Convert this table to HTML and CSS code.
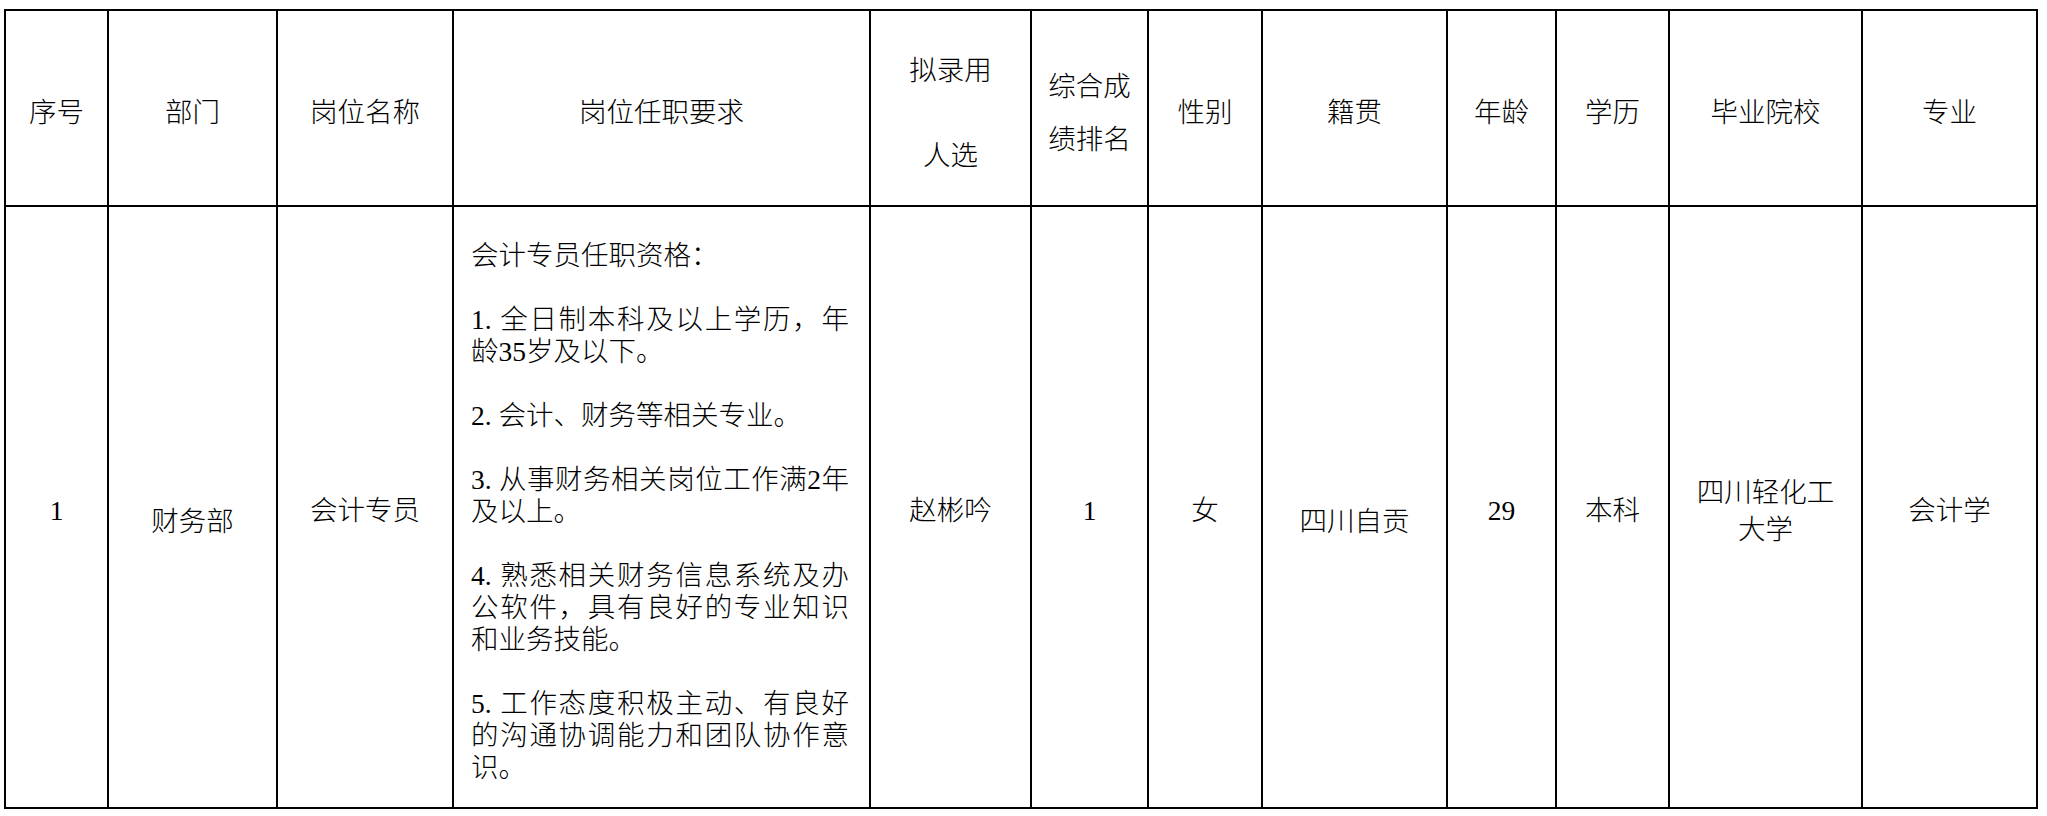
FILE: index.html
```html
<!DOCTYPE html>
<html lang="zh-CN">
<head>
<meta charset="utf-8">
<title>拟录用人选</title>
<link rel="stylesheet" href="styles.css">
</head>
<body>
<table class="sheet">
  <colgroup>
    <col class="c-no"><col class="c-dept"><col class="c-post"><col class="c-req"><col class="c-name"><col class="c-rank"><col class="c-sex"><col class="c-home"><col class="c-age"><col class="c-edu"><col class="c-school"><col class="c-major">
  </colgroup>
  <thead>
    <tr class="head-row">
      <th>序号</th>
      <th>部门</th>
      <th>岗位名称</th>
      <th>岗位任职要求</th>
      <th><div class="wide-lines">拟录用<br>人选</div></th>
      <th><div class="mid-lines">综合成<br>绩排名</div></th>
      <th>性别</th>
      <th>籍贯</th>
      <th>年龄</th>
      <th>学历</th>
      <th>毕业院校</th>
      <th>专业</th>
    </tr>
  </thead>
  <tbody>
    <tr class="body-row">
      <td>1</td>
      <td class="low">财务部</td>
      <td>会计专员</td>
      <td class="req">
        <p>会计专员任职资格：</p>
        <p>1. 全日制本科及以上学历，年龄35岁及以下。</p>
        <p>2. 会计、财务等相关专业。</p>
        <p>3. 从事财务相关岗位工作满2年及以上。</p>
        <p>4. 熟悉相关财务信息系统及办公软件，具有良好的专业知识和业务技能。</p>
        <p>5. 工作态度积极主动、有良好的沟通协调能力和团队协作意识。</p>
      </td>
      <td>赵彬吟</td>
      <td>1</td>
      <td>女</td>
      <td class="low">四川自贡</td>
      <td>29</td>
      <td>本科</td>
      <td><div class="school">四川轻化工<br>大学</div></td>
      <td>会计学</td>
    </tr>
  </tbody>
</table>
</body>
</html>
```

FILE: styles.css
```css
html, body {
  margin: 0;
  padding: 0;
  background: #ffffff;
}

body {
  padding: 9px 0 0 4px;
  font-family: "Liberation Serif", "Noto Sans CJK SC", serif;
  font-size: 27.5px;
  color: #000000;
}

.sheet {
  border-collapse: collapse;
  table-layout: fixed;
  width: 2034px;
  border: 2px solid #000;
}

.sheet th,
.sheet td {
  border: 2px solid #000;
  padding: 0;
  text-align: center;
  vertical-align: middle;
  font-weight: 300;
  line-height: 32px;
}

.c-no { width: 103px; }
.c-dept { width: 169px; }
.c-post { width: 176px; }
.c-req { width: 417px; }
.c-name { width: 161px; }
.c-rank { width: 117px; }
.c-sex { width: 114px; }
.c-home { width: 185px; }
.c-age { width: 109px; }
.c-edu { width: 113px; }
.c-school { width: 193px; }
.c-major { width: 175px; }

.head-row {
  height: 196px;
}

.head-row th {
  padding-top: 10px;
}

.wide-lines {
  line-height: 85px;
}

.mid-lines {
  line-height: 53px;
}

.body-row {
  height: 602px;
}

.body-row td {
  padding-top: 8px;
}

.body-row td.low {
  padding-top: 30px;
}

.body-row td.req {
  text-align: left;
  padding: 9px 20px 0 17px;
}

.req p {
  margin: 0 0 32px 0;
  text-align: justify;
}

.req p:last-child {
  margin-bottom: 0;
}

.school {
  line-height: 37px;
}
```
